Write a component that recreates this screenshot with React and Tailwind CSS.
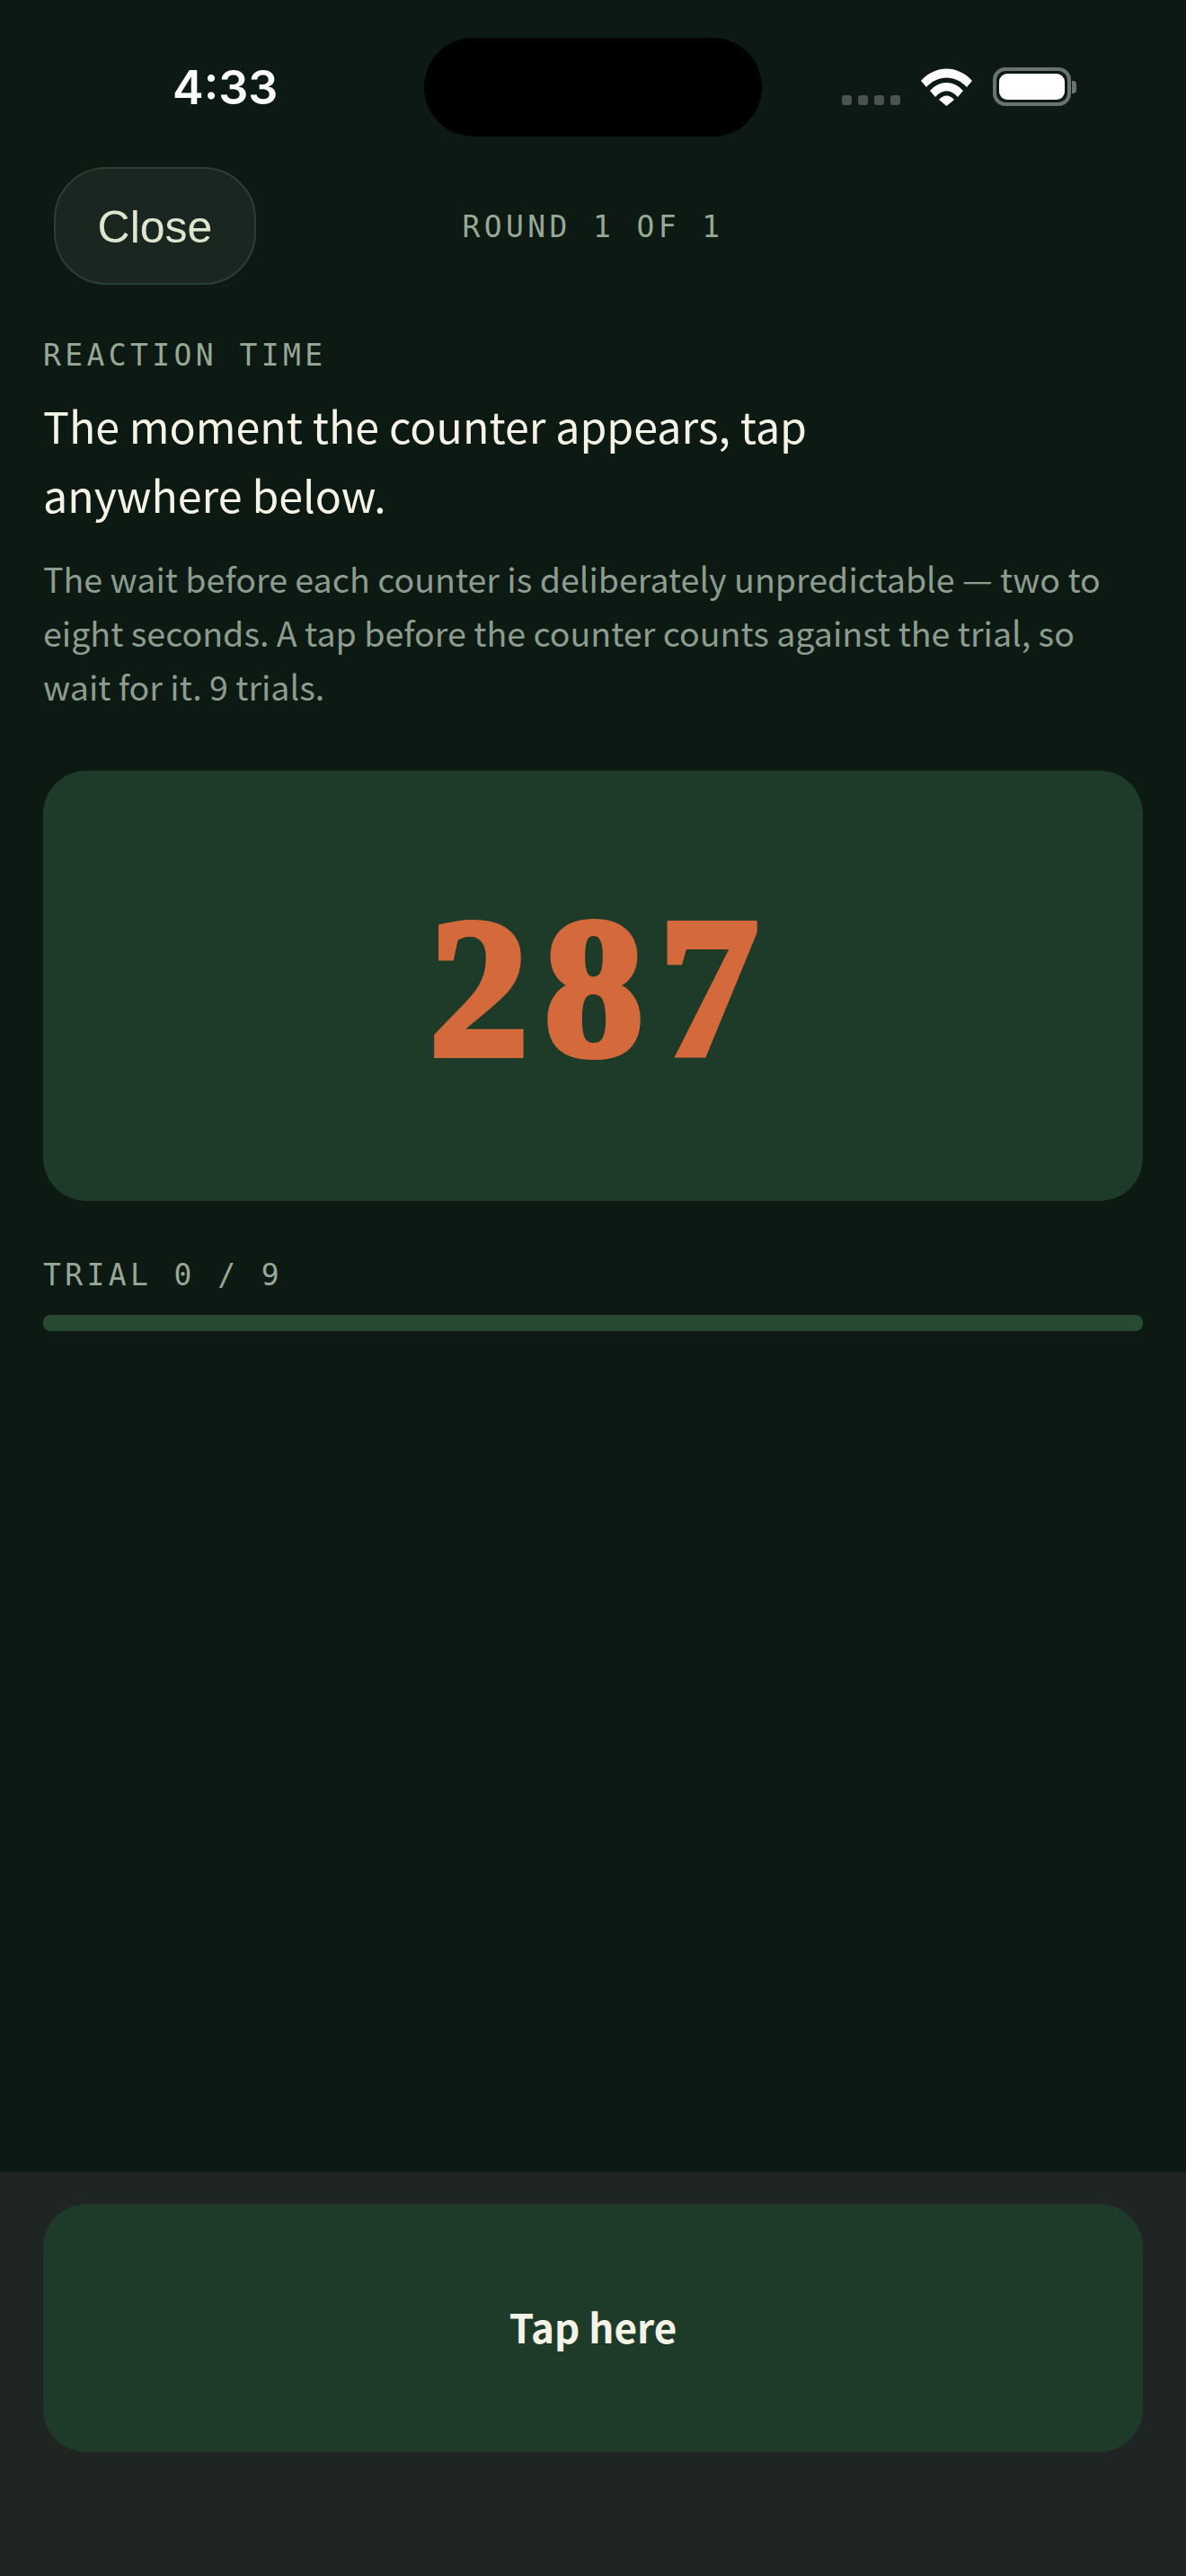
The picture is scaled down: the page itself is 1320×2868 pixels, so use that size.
import React from 'react';

const mono = "font-['DejaVu_Sans_Mono',monospace] text-[33px] leading-[40px] tracking-[4.4px] text-[#98a896]";
const sans = "font-['Noto_Sans_CJK_SC','Noto_Sans',sans-serif]";

const StatusBar = () => (
    <div className="h-[186px] grid grid-cols-[1fr_376px_1fr] pt-[42px]">
        <span className="pl-[192px] mt-[25px] font-['Inter',sans-serif] font-semibold text-[52px] leading-[62px] text-white">4:33</span>
        <div className="h-[110px] rounded-[55px] bg-black" />
        <div className="flex items-end gap-[23px] h-[43px] mt-[33px] pl-[89px]">
            <div className="flex gap-[7px] pb-[1px]">
                <div className="w-[11px] h-[11px] rounded-[3px] bg-[#4a544e]" />
                <div className="w-[11px] h-[11px] rounded-[3px] bg-[#4a544e]" />
                <div className="w-[11px] h-[11px] rounded-[3px] bg-[#4a544e]" />
                <div className="w-[11px] h-[11px] rounded-[3px] bg-[#4a544e]" />
            </div>
            <svg width="57" height="42" viewBox="0 0 57 42">
                <path d="M0 14 C16 -4 41 -4 57 14 L51 21 C38 7 19 7 6 21 Z" fill="#fff" />
                <path d="M10 25 C21 13 36 13 47 25 L41 32 C33 23 24 23 16 32 Z" fill="#fff" />
                <path d="M20 35 C25 29 32 29 37 35 L28.5 42 Z" fill="#fff" />
            </svg>
            <div className="flex items-center gap-[1px]">
                <div className="w-[87px] h-[43px] rounded-[14px] border-[4px] border-[#6b736f] p-[3px]">
                    <div className="w-full h-full rounded-[9px] bg-white" />
                </div>
                <div className="w-[5px] h-[14px] rounded-r-[4px] bg-[#6b736f]" />
            </div>
        </div>
    </div>
);

export default function App() {
    return (
        <div className="w-[1320px] h-[2868px] flex flex-col bg-[#0d1913]">
            <StatusBar />

            <div className="grid grid-cols-[1fr_auto_1fr] items-center pl-[60px] pr-[60px]">
                <button className="justify-self-start w-[225px] h-[131px] pt-[4px] rounded-[58px] border-[2px] border-[#2a4034] bg-[#1a2620] font-['Liberation_Sans',sans-serif] text-[50px] text-[#dfe6cf]">
                    Close
                </button>
                <div className={`mt-[3px] ${mono}`}>ROUND 1 OF 1</div>
                <div />
            </div>

            <main className="flex-1 px-[48px] pt-[59px]">
                <div className={mono}>REACTION TIME</div>
                <h1 className={`mt-[19px] w-[900px] font-normal text-[48.3px] leading-[77px] text-[#f5f3e6] ${sans}`}>
                    The moment the counter appears, tap anywhere below.
                </h1>
                <p className={`mt-[25px] text-[37.6px] leading-[60px] text-[#8c9c8e] ${sans}`}>
                    The wait before each counter is deliberately unpredictable — two to eight seconds. A tap before the counter counts against the trial, so wait for it. 9 trials.
                </p>

                <div className="mt-[64px] h-[479px] pt-[4px] pl-[20px] rounded-[48px] bg-[#1e3a29] flex items-center justify-center">
                    <span className="font-['Liberation_Serif',serif] font-bold text-[220px] leading-none tracking-[18px] text-[#d4693c] [-webkit-text-stroke:8px_#d4693c]">287</span>
                </div>

                <div className={`mt-[63px] ${mono}`}>TRIAL 0 / 9</div>
                <div className="mt-[24px] h-[18px] rounded-[8px] bg-[#284a33]" />
            </main>

            <div className="h-[450px] bg-[#1f2522] px-[48px] pt-[36px]">
                <button className={`w-full h-[276px] pb-[4px] rounded-[48px] bg-[#1e3a29] font-semibold text-[44px] text-[#f5f3e6] ${sans}`}>
                    Tap here
                </button>
            </div>
        </div>
    );
}
